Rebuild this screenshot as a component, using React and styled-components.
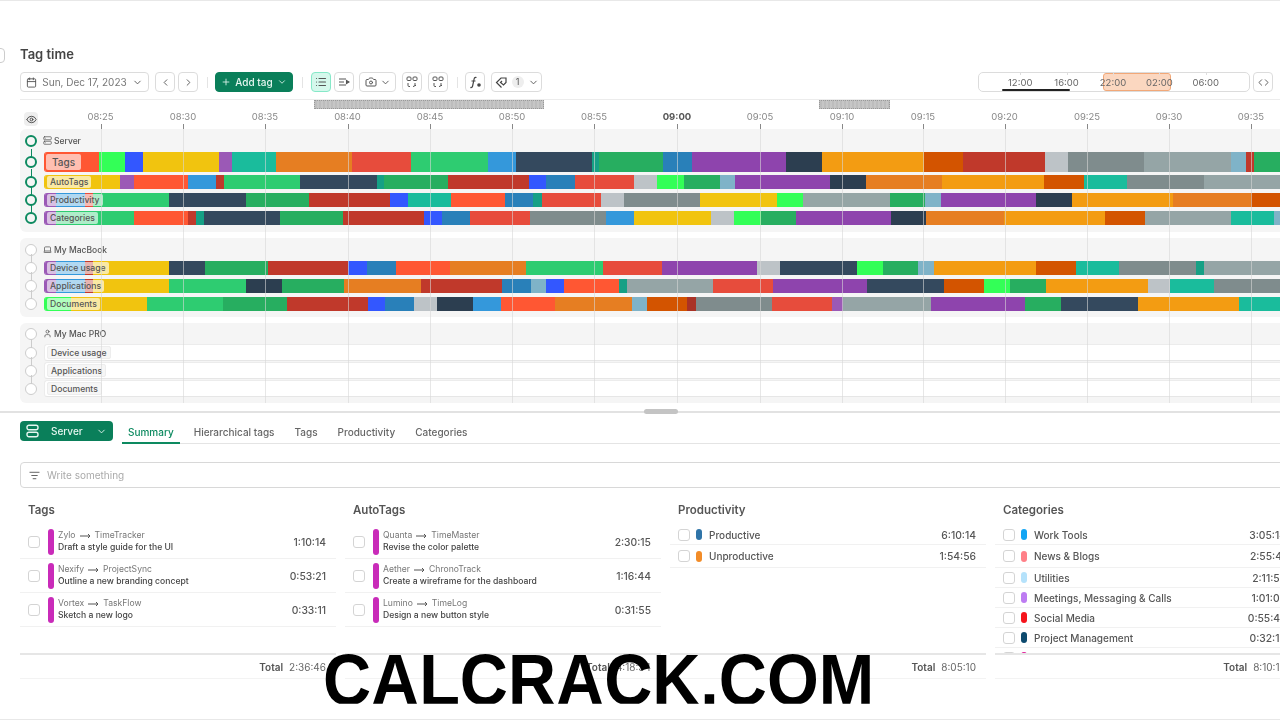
import React from 'react';
import styled, { createGlobalStyle } from 'styled-components';
import {
  Calendar, ChevronDown, ChevronLeft, ChevronRight, Plus, List, Camera,
  Code, Eye, Server, Laptop, User, ListFilter,
} from 'lucide-react';

const GlobalStyle = createGlobalStyle`
  html, body { margin: 0; padding: 0; background: #fff; }
  body { font-family: Inter, "Liberation Sans", sans-serif; color: #444; overflow: hidden; }
`;

const GREEN = '#0a7f5a';
const MAGENTA = '#c92bb9';

const c = {
  tomato: '#ff5733', neon: '#33ff57', blue: '#3357ff', yellow: '#f1c40f', violet: '#9b59b6',
  teal: '#1abc9c', orange: '#e67e22', red: '#e74c3c', green: '#2ecc71', sky: '#3498db',
  slate: '#34495e', dteal: '#16a085', dgreen: '#27ae60', dblue: '#2980b9', purple: '#8e44ad',
  navy: '#2c3e50', amber: '#f39c12', rust: '#d35400', dred: '#c0392b', silver: '#bdc3c7',
  steel: '#7f8c8d', grey: '#95a5a6', ice: '#7fb3c8', brick: '#a93226',
};

// every bar is [colour, x where the segment ends]
const bars = {
  Tags: [['tomato', 99], ['neon', 125], ['blue', 143], ['yellow', 219], ['violet', 232], ['teal', 276], ['orange', 352], ['red', 411], ['green', 488], ['sky', 516], ['slate', 592], ['dteal', 599], ['dgreen', 663], ['dblue', 692], ['purple', 786], ['navy', 822], ['amber', 924], ['rust', 963], ['dred', 1045], ['silver', 1068], ['steel', 1144], ['grey', 1231], ['ice', 1246], ['dred', 1254], ['dgreen', 1280]],
  AutoTags: [['yellow', 120], ['violet', 134], ['tomato', 188], ['sky', 216], ['dred', 224], ['green', 300], ['slate', 377], ['dteal', 384], ['dgreen', 448], ['dred', 529], ['blue', 546], ['dblue', 575], ['red', 634], ['silver', 657], ['neon', 684], ['dgreen', 720], ['ice', 735], ['purple', 830], ['navy', 866], ['orange', 942], ['amber', 1044], ['rust', 1084], ['teal', 1127], ['steel', 1204], ['grey', 1280]],
  Productivity: [['violet', 56], ['sky', 85], ['red', 93], ['green', 169], ['slate', 246], ['dgreen', 309], ['dred', 390], ['blue', 408], ['teal', 451], ['tomato', 505], ['dblue', 533], ['dteal', 542], ['red', 601], ['silver', 624], ['steel', 700], ['yellow', 777], ['neon', 803], ['grey', 890], ['dgreen', 925], ['ice', 941], ['purple', 1036], ['navy', 1072], ['amber', 1173], ['orange', 1251], ['rust', 1280]],
  Categories: [['violet', 56], ['green', 134], ['tomato', 188], ['dred', 196], ['dteal', 204], ['slate', 280], ['dgreen', 343], ['dred', 424], ['blue', 442], ['dblue', 470], ['red', 530], ['steel', 606], ['sky', 634], ['yellow', 711], ['silver', 734], ['neon', 761], ['dgreen', 796], ['purple', 891], ['navy', 926], ['orange', 1004], ['amber', 1105], ['rust', 1145], ['grey', 1231], ['teal', 1274], ['ice', 1280]],
  DeviceUsage: [['violet', 56], ['sky', 85], ['dred', 93], ['yellow', 169], ['slate', 205], ['dgreen', 268], ['dred', 348], ['blue', 367], ['dblue', 396], ['tomato', 450], ['orange', 526], ['green', 603], ['red', 662], ['purple', 757], ['silver', 780], ['slate', 857], ['neon', 883], ['dgreen', 918], ['ice', 934], ['amber', 1036], ['rust', 1076], ['teal', 1119], ['steel', 1196], ['dteal', 1204], ['grey', 1280]],
  Applications: [['violet', 56], ['sky', 85], ['dred', 93], ['yellow', 169], ['green', 246], ['navy', 282], ['dgreen', 344], ['orange', 421], ['dred', 502], ['dblue', 531], ['ice', 546], ['blue', 564], ['tomato', 619], ['dteal', 627], ['grey', 713], ['red', 773], ['purple', 867], ['slate', 944], ['rust', 984], ['neon', 1010], ['dgreen', 1046], ['amber', 1148], ['silver', 1170], ['teal', 1214], ['steel', 1280]],
  Documents: [['neon', 71], ['yellow', 147], ['green', 223], ['dgreen', 287], ['dred', 368], ['blue', 385], ['dblue', 414], ['silver', 437], ['navy', 473], ['sky', 501], ['tomato', 555], ['orange', 632], ['ice', 647], ['rust', 687], ['brick', 696], ['steel', 772], ['red', 832], ['violet', 843], ['grey', 931], ['purple', 1025], ['dgreen', 1061], ['slate', 1138], ['amber', 1239], ['teal', 1280]],
};

const ticks = ['08:25', '08:30', '08:35', '08:40', '08:45', '08:50', '08:55', '09:00', '09:05', '09:10', '09:15', '09:20', '09:25', '09:30', '09:35'];
const tickX = [100.5, 183, 265, 347.5, 430, 512, 594, 677, 760, 842, 923, 1004.5, 1087, 1169, 1251];

const tagItems = [
  ['Zylo', 'TimeTracker', 'Draft a style guide for the UI', '1:10:14'],
  ['Nexify', 'ProjectSync', 'Outline a new branding concept', '0:53:21'],
  ['Vortex', 'TaskFlow', 'Sketch a new logo', '0:33:11'],
];
const autoItems = [
  ['Quanta', 'TimeMaster', 'Revise the color palette', '2:30:15'],
  ['Aether', 'ChronoTrack', 'Create a wireframe for the dashboard', '1:16:44'],
  ['Lumino', 'TimeLog', 'Design a new button style', '0:31:55'],
];
const prodItems = [
  ['#2f74a8', 'Productive', '6:10:14', 20],
  ['#f28c28', 'Unproductive', '1:54:56', 23],
];
const catItems = [
  ['#12a5f4', 'Work Tools', '3:05:14', 20],
  ['#ff8088', 'News & Blogs', '2:55:41', 23],
  ['#b5e2fb', 'Utilities', '2:11:52', 20],
  ['#bd7cf2', 'Meetings, Messaging & Calls', '1:01:03', 20],
  ['#f5141c', 'Social Media', '0:55:47', 20],
  ['#0d4a6e', 'Project Management', '0:32:16', 20],
  ['#e0209a', 'Design', '0:11:02', 20],
];

const Root = styled.div`
  position: relative;
  width: 1280px;
  height: 720px;
  overflow: hidden;
`;
const Page = styled.div`
  height: 720px;
  box-sizing: border-box;
  overflow: hidden;
  border-top: 1px solid #e8e8e8;
  border-bottom: 1px solid #e8e8e8;
  filter: blur(0.4px);
`;

const Back = styled.span`
  position: absolute;
  left: -9px;
  top: 47px;
  width: 12px;
  height: 13px;
  border: 1px solid #ccc;
  border-radius: 4px;
`;
const Title = styled.h1`
  margin: 0;
  padding: 45px 0 0 20px;
  font-size: 13px;
  line-height: 16px;
  font-weight: 600;
  color: #444;
`;

const Toolbar = styled.div`
  margin: 10px 0 0 20px;
  height: 28px;
  box-sizing: border-box;
  display: flex;
  align-items: flex-start;
  border-bottom: 1px solid #ececec;
`;
const Btn = styled.button`
  flex: none;
  height: 20px;
  width: ${p => p.$w || 20}px;
  margin: 0 0 0 ${p => p.$ml || 0}px;
  padding: 0;
  box-sizing: border-box;
  display: flex;
  align-items: center;
  justify-content: center;
  gap: ${p => p.$gap || 3}px;
  border: 1px solid ${p => (p.$active ? '#86e8c8' : '#dcdcdc')};
  background: ${p => (p.$active ? '#d5f8ec' : '#fff')};
  border-radius: 4px;
  font: 400 10px Inter, sans-serif;
  color: #777;
  svg { color: #555; }
`;
const AddBtn = styled(Btn)`
  border-color: ${GREEN};
  background: ${GREEN};
  color: #e6f6f0;
  font-weight: 500;
  svg { color: #e6f6f0; }
`;
const Sep = styled.span`
  flex: none;
  width: 1px;
  height: 11px;
  margin: 5px ${p => p.$mr || 7}px 0 9px;
  background: #e4e4e4;
`;
const Count = styled.span`
  width: 12px;
  height: 12px;
  border-radius: 50%;
  background: #eee;
  font-size: 9px;
  line-height: 12px;
  text-align: center;
  color: #555;
`;
const Range = styled.div`
  position: relative;
  margin-left: auto;
  flex: none;
  width: 272px;
  height: 20px;
  box-sizing: border-box;
  padding-left: 18px;
  display: flex;
  align-items: center;
  border: 1px solid #dcdcdc;
  border-radius: 5px;
`;
const RangeLabel = styled.span`
  position: relative;
  width: 46.4px;
  text-align: center;
  font-size: 9.5px;
  color: #666;
  z-index: 1;
  &::before {
    content: '';
    position: absolute;
    left: 50%;
    top: -5px;
    height: 3px;
    width: 1px;
    background: #ddd;
  }
`;
const RangeMark = styled.span`
  position: absolute;
  left: 23px;
  top: 16px;
  width: 68px;
  height: 2px;
  border-radius: 1px;
  background: #222;
`;
const RangePick = styled.span`
  position: absolute;
  left: 124px;
  top: 0;
  width: 68px;
  height: 18px;
  box-sizing: border-box;
  background: #fbd7c0;
  border: 1px solid #f2a878;
  border-radius: 3px;
`;
const EndGap = styled.span`
  flex: none;
  width: 7px;
`;

const Hatches = styled.div`
  height: 9px;
  margin-left: 314px;
  display: flex;
  gap: 275px;
`;
const Hatch = styled.span`
  width: ${p => p.$w}px;
  height: 9px;
  box-sizing: border-box;
  background: repeating-linear-gradient(90deg, #bdbdbd 0 2px, #c6c6c6 2px 4px);
  border: 1px dotted #999;
`;

const Timeline = styled.div`
  position: relative;
`;
const Axis = styled.div`
  height: 20px;
  padding-left: 24px;
`;
const EyeBtn = styled.span`
  width: 14px;
  height: 14px;
  position: relative;
  top: 3px;
  border-radius: 4px;
  background: #eee;
  display: flex;
  align-items: center;
  justify-content: center;
  color: #444;
`;
const AxisLabel = styled.span`
  position: absolute;
  top: 2px;
  transform: translateX(-50%);
  font-size: 9.5px;
  line-height: 12px;
  font-weight: ${p => (p.$bold ? 700 : 400)};
  color: ${p => (p.$bold ? '#555' : '#888')};
`;
const GridLine = styled.span`
  position: absolute;
  top: 15px;
  bottom: 0;
  width: 1px;
  z-index: 2;
  background: rgba(215, 215, 215, 0.6);
  &::before {
    content: '';
    position: absolute;
    left: 0;
    top: 0;
    width: 1px;
    height: 5px;
    background: #888;
  }
`;

const Panels = styled.div`
  display: flex;
  flex-direction: column;
  gap: 6px;
  margin-left: 20px;
`;
const Panel = styled.section`
  background: #f5f5f5;
  border-radius: 6px 0 0 6px;
  padding-bottom: ${p => p.$pb}px;
`;
const GroupHead = styled.div`
  height: ${p => p.$h}px;
  display: flex;
  align-items: center;
  padding-left: 4px;
  font-size: 8.5px;
  font-weight: 500;
  color: #555;
  svg { color: #555; margin: 0 2px 0 -1px; }
`;
const Node = styled.span`
  position: relative;
  flex: none;
  box-sizing: border-box;
  width: 12px;
  height: 12px;
  margin: 0 7px 0 1px;
  border-radius: 50%;
  background: ${p => (p.$on ? '#f5f5f5' : '#fff')};
  border: ${p => (p.$on ? '2.5px solid #0d8a60' : '1px solid #ccc')};
  &::after {
    content: ${p => (p.$link ? "''" : 'none')};
    position: absolute;
    left: 50%;
    bottom: 100%;
    width: 1px;
    height: 9px;
    margin-left: -0.5px;
    background: ${p => (p.$on ? '#0d8a60' : '#ccc')};
  }
`;
const Row = styled.div`
  height: ${p => p.$h}px;
  margin-bottom: ${p => p.$mb || 0}px;
  display: flex;
  align-items: center;
  padding-left: 4px;
`;
const Bar = styled.div`
  position: relative;
  flex: 1;
  height: ${p => p.$h}px;
  display: flex;
  overflow: hidden;
  border-radius: 3px 0 0 3px;
  border-left: 1px solid ${p => p.$edge};
  box-sizing: border-box;
`;
const Seg = styled.span`
  flex: none;
  height: 100%;
`;
const Tag = styled.span`
  position: absolute;
  left: ${p => (p.$big ? 1 : 2)}px;
  top: ${p => (p.$big ? 2 : 1)}px;
  bottom: ${p => (p.$big ? 2 : 1)}px;
  display: flex;
  align-items: center;
  padding: 0 ${p => (p.$big ? 6 : 3)}px;
  border-radius: 2px;
  background: rgba(255, 255, 255, 0.62);
  font-size: ${p => (p.$big ? 10 : 8.6)}px;
  font-weight: 500;
  color: #555;
`;
const EmptyBar = styled.div`
  flex: 1;
  height: 17px;
  position: relative;
  box-sizing: border-box;
  background: #fff;
  border-top: 1px solid #ececec;
  border-bottom: 1px solid #e6e6e6;
  border-left: 1px solid #ececec;
  border-radius: 3px 0 0 3px;
`;
const EmptyTag = styled(Tag)`
  background: #f6f6f6;
  border: 1px solid #ededed;
  top: 1px;
  bottom: 1px;
  left: 2px;
`;

const Divider = styled.div`
  position: relative;
  height: 2px;
  margin-top: 8px;
  background: #e2e2e2;
`;
const Handle = styled.span`
  position: absolute;
  left: 644px;
  top: -2px;
  width: 34px;
  height: 5px;
  border-radius: 3px;
  background: #c4c4c4;
`;

const DetailBar = styled.div`
  display: flex;
  align-items: flex-start;
  margin: 8px 0 0 20px;
  height: 22px;
`;
const ServerBtn = styled.div`
  width: 93px;
  height: 20px;
  box-sizing: border-box;
  padding: 0 6px;
  display: flex;
  align-items: center;
  border-radius: 4px;
  background: ${GREEN};
  color: #e6f6f0;
  font-size: 10px;
  font-weight: 500;
  svg { flex: none; }
  span { flex: 1; padding-left: 12px; }
`;
const Tabs = styled.nav`
  flex: 1;
  margin-left: 9px;
  display: flex;
  height: 22px;
  border-bottom: 1px solid #e4e4e4;
`;
const TabItem = styled.span`
  height: 22px;
  box-sizing: border-box;
  padding: 0 6px;
  margin-right: 8px;
  display: flex;
  align-items: center;
  font-size: 10px;
  font-weight: 500;
  color: ${p => (p.$on ? '#0d8a60' : '#666')};
  ${p => (p.$on ? 'border-bottom: 2px solid #0d8a60; margin-bottom: -1px; height: 23px;' : '')}
`;
const Search = styled.div`
  margin: 19px -20px 0 20px;
  height: 26px;
  box-sizing: border-box;
  padding-left: 8px;
  display: flex;
  align-items: center;
  gap: 7px;
  border: 1px solid #d8d8d8;
  border-radius: 4px;
  font-size: 10px;
  color: #aaa;
  svg { color: #555; }
`;
const Columns = styled.div`
  display: grid;
  grid-template-columns: repeat(3, 316px) 301px;
  column-gap: 9px;
  margin: 14px 0 0 20px;
`;
const Column = styled.div`
  display: flex;
  flex-direction: column;
`;
const ColTitle = styled.h2`
  margin: 0;
  padding-left: 8px;
  height: 23px;
  font-size: 11.5px;
  line-height: 16px;
  font-weight: 600;
  color: #555;
`;
const ItemList = styled.div`
  height: 128px;
  overflow: hidden;
`;
const ItemRow = styled.div`
  height: ${p => p.$h}px;
  box-sizing: border-box;
  display: flex;
  align-items: center;
  padding: 0 10px 0 8px;
  border-bottom: 1px solid #f1f1f1;
`;
const Check = styled.span`
  flex: none;
  width: 12px;
  height: 12px;
  box-sizing: border-box;
  border: 1px solid #d4d4d4;
  border-radius: 3px;
  background: #fff;
`;
const TallPill = styled.span`
  flex: none;
  width: 6px;
  height: 26px;
  margin: 0 4px 0 8px;
  border-radius: 3px;
  background: ${MAGENTA};
`;
const DotPill = styled.span`
  flex: none;
  width: 6px;
  height: 11px;
  margin: 0 7px 0 6px;
  border-radius: 3px;
`;
const Stack = styled.div`
  flex: 1;
  font-size: 8.6px;
  line-height: 11px;
`;
const Route = styled.div`
  display: flex;
  align-items: center;
  gap: 4px;
  color: #777;
`;
const Task = styled.div`
  margin-top: 0.5px;
  color: #444;
  font-weight: 500;
`;
const ItemName = styled.span`
  flex: 1;
  font-size: 10px;
  font-weight: 500;
  color: #555;
`;
const Time = styled.span`
  font-size: 10.3px;
  font-weight: 500;
  color: #555;
`;
const TotalRow = styled.div`
  height: 26px;
  box-sizing: border-box;
  display: flex;
  align-items: center;
  justify-content: flex-end;
  gap: 6px;
  padding-right: 10px;
  border-top: 2px solid #e6e6e6;
  border-bottom: 1px solid #f3f3f3;
  font-size: 10px;
  color: #666;
  strong { font-weight: 600; color: #555; }
`;
const Watermark = styled.div`
  position: absolute;
  left: 323px;
  top: 653px;
  height: 47.2px;
  overflow: hidden;
  transform: scaleY(1.08);
  transform-origin: top left;
  font: 700 66.6px/50px "Liberation Sans", Arial, sans-serif;
  color: #000;
  white-space: nowrap;
`;

const Arrow = () => (
  <svg width="11" height="6" viewBox="0 0 11 6" fill="none" stroke="#555" strokeWidth="1">
    <path d="M0 3h10M8 1l2 2-2 2" />
  </svg>
);

const ListArrow = () => (
  <svg width="12" height="12" viewBox="0 0 12 12" fill="none" stroke="#555" strokeWidth="1.1">
    <path d="M1 3h7M1 6h5M1 9h7" />
    <path d="M8.5 4.5 11 6 8.5 7.5z" fill="#555" />
  </svg>
);

const LayoutGlyph = () => (
  <svg width="12" height="12" viewBox="0 0 12 12" fill="none" stroke="#555" strokeWidth="1">
    <rect x="1" y="1" width="4" height="3.5" rx="1" />
    <rect x="7" y="1" width="4" height="3.5" rx="1" />
    <path d="M2 7v2.5q0 1 1 1h1M9 7v2q0 1.5-2 1.5M9 10l1-1" />
  </svg>
);

const FnGlyph = () => (
  <svg width="13" height="13" viewBox="0 0 13 13" fill="none" stroke="#444" strokeWidth="1.2">
    <path d="M7.5 1.5q-2-.5-2.4 1.5L3.6 10q-.4 2-2.2 1.4M2.5 5h4" />
    <circle cx="10" cy="9" r="1.8" fill="#444" stroke="none" />
  </svg>
);

const TagLoop = () => (
  <svg width="13" height="13" viewBox="0 0 13 13" fill="none" stroke="#444" strokeWidth="1.2">
    <path d="M6.5 11.5 1.5 6.5 6 2h5v4.5L8.5 9 5.5 6.5 7 5" />
  </svg>
);

const ServerGlyph = () => (
  <svg width="13" height="14" viewBox="0 0 13 14" fill="none" stroke="#e6f6f0" strokeWidth="1.4">
    <rect x="1" y="1.2" width="11" height="4.6" rx="2" />
    <rect x="1" y="8.2" width="11" height="4.6" rx="2" />
  </svg>
);

const BarTrack = ({ name, label, h, big }) => {
  const segs = bars[name];
  let prev = 45;
  return (
    <Bar $h={h} $edge={c[segs[0][0]]}>
      {segs.map(([col, end], i) => {
        const w = end - prev;
        prev = end;
        return <Seg key={i} style={{ width: w, background: c[col] }} />;
      })}
      <Tag $big={big}>{label}</Tag>
    </Bar>
  );
};

const TaskList = ({ items }) => (
  <ItemList>
    {items.map(([from, to, task, time]) => (
      <ItemRow $h={34} key={task}>
        <Check />
        <TallPill />
        <Stack>
          <Route>{from} <Arrow /> {to}</Route>
          <Task>{task}</Task>
        </Stack>
        <Time>{time}</Time>
      </ItemRow>
    ))}
  </ItemList>
);

const PlainList = ({ items }) => (
  <ItemList>
    {items.map(([color, name, time, h]) => (
      <ItemRow $h={h} key={name}>
        <Check />
        <DotPill style={{ background: color }} />
        <ItemName>{name}</ItemName>
        <Time>{time}</Time>
      </ItemRow>
    ))}
  </ItemList>
);

export default function App() {
  return (
    <Root>
      <GlobalStyle />
      <Page>
        <Back />
        <Title>Tag time</Title>
        <Toolbar>
          <Btn $w={129} $gap={5}>
            <Calendar size={11} />Sun, Dec 17, 2023<ChevronDown size={11} />
          </Btn>
          <Btn $ml={6}><ChevronLeft size={11} /></Btn>
          <Btn $ml={3}><ChevronRight size={11} /></Btn>
          <Sep />
          <AddBtn $w={78} $gap={4}><Plus size={10} />Add tag<ChevronDown size={10} /></AddBtn>
          <Sep $mr={8} />
          <Btn $active><List size={12} strokeWidth={2.2} /></Btn>
          <Btn $ml={3}><ListArrow /></Btn>
          <Btn $ml={5} $w={37}><Camera size={12} /><ChevronDown size={11} /></Btn>
          <Btn $ml={6}><LayoutGlyph /></Btn>
          <Btn $ml={6}><LayoutGlyph /></Btn>
          <Sep />
          <Btn><FnGlyph /></Btn>
          <Btn $ml={6} $w={51} $gap={4}><TagLoop /><Count>1</Count><ChevronDown size={11} /></Btn>
          <Range>
            <RangeMark />
            <RangePick />
            <RangeLabel>12:00</RangeLabel>
            <RangeLabel>16:00</RangeLabel>
            <RangeLabel>22:00</RangeLabel>
            <RangeLabel>02:00</RangeLabel>
            <RangeLabel>06:00</RangeLabel>
          </Range>
          <Btn $ml={3}><Code size={11} /></Btn>
          <EndGap />
        </Toolbar>
        <Hatches>
          <Hatch $w={230} />
          <Hatch $w={71} />
        </Hatches>
        <Timeline>
          <Axis>
            <EyeBtn><Eye size={11} /></EyeBtn>
          </Axis>
          {ticks.map((t, i) => (
            <AxisLabel key={t} $bold={t === '09:00'} style={{ left: tickX[i] }}>{t}</AxisLabel>
          ))}
          {tickX.map(x => <GridLine key={x} style={{ left: x }} />)}
          <Panels>
            <Panel $pb={7}>
              <GroupHead $h={23}><Node $on /><Server size={9} />Server</GroupHead>
              <Row $h={20} $mb={3}><Node $on $link /><BarTrack name="Tags" label="Tags" h={20} big /></Row>
              <Row $h={14} $mb={4}><Node $on $link /><BarTrack name="AutoTags" label="AutoTags" h={14} /></Row>
              <Row $h={14} $mb={4}><Node $on $link /><BarTrack name="Productivity" label="Productivity" h={14} /></Row>
              <Row $h={14}><Node $on $link /><BarTrack name="Categories" label="Categories" h={14} /></Row>
            </Panel>
            <Panel $pb={6}>
              <GroupHead $h={23}><Node /><Laptop size={9} />My MacBook</GroupHead>
              <Row $h={14} $mb={4}><Node $link /><BarTrack name="DeviceUsage" label="Device usage" h={14} /></Row>
              <Row $h={14} $mb={4}><Node $link /><BarTrack name="Applications" label="Applications" h={14} /></Row>
              <Row $h={14}><Node $link /><BarTrack name="Documents" label="Documents" h={14} /></Row>
            </Panel>
            <Panel $pb={6}>
              <GroupHead $h={21}><Node /><User size={9} />My Mac PRO</GroupHead>
              {['Device usage', 'Applications', 'Documents'].map((name, i) => (
                <Row $h={17} $mb={i < 2 ? 1 : 0} key={name}>
                  <Node $link />
                  <EmptyBar><EmptyTag>{name}</EmptyTag></EmptyBar>
                </Row>
              ))}
            </Panel>
          </Panels>
        </Timeline>
        <Divider><Handle /></Divider>
        <DetailBar>
          <ServerBtn><ServerGlyph /><span>Server</span><ChevronDown size={11} /></ServerBtn>
          <Tabs>
            <TabItem $on>Summary</TabItem>
            <TabItem>Hierarchical tags</TabItem>
            <TabItem>Tags</TabItem>
            <TabItem>Productivity</TabItem>
            <TabItem>Categories</TabItem>
          </Tabs>
        </DetailBar>
        <Search><ListFilter size={11} />Write something</Search>
        <Columns>
          <Column>
            <ColTitle>Tags</ColTitle>
            <TaskList items={tagItems} />
            <TotalRow><strong>Total</strong>2:36:46</TotalRow>
          </Column>
          <Column>
            <ColTitle>AutoTags</ColTitle>
            <TaskList items={autoItems} />
            <TotalRow><strong>Total</strong>4:18:34</TotalRow>
          </Column>
          <Column>
            <ColTitle>Productivity</ColTitle>
            <PlainList items={prodItems} />
            <TotalRow><strong>Total</strong>8:05:10</TotalRow>
          </Column>
          <Column>
            <ColTitle>Categories</ColTitle>
            <PlainList items={catItems} />
            <TotalRow><strong>Total</strong>8:10:14</TotalRow>
          </Column>
        </Columns>
      </Page>
      <Watermark>CALCRACK.COM</Watermark>
    </Root>
  );
}
